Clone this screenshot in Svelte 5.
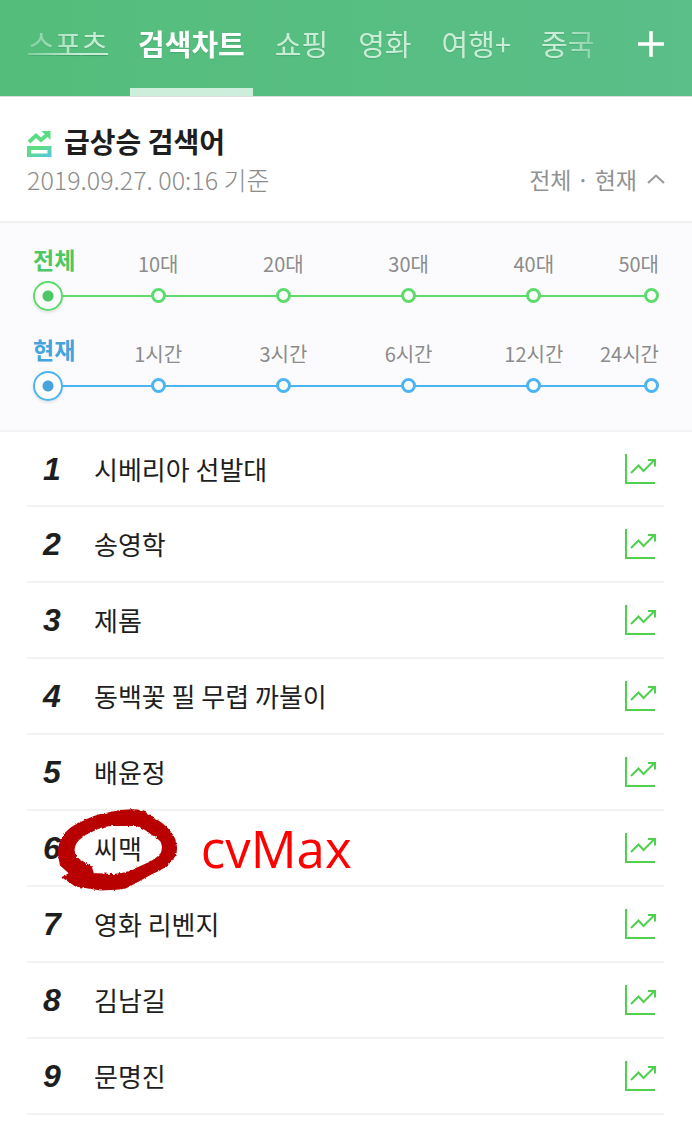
<script>
  const tabs = [
    { name: '스포츠', underlined: true },
    { name: '검색차트', active: true },
    { name: '쇼핑' },
    { name: '영화' },
    { name: '여행+' },
    { name: '중국' },
  ];

  const filters = [
    { id: 'age', options: ['전체', '10대', '20대', '30대', '40대', '50대'] },
    { id: 'time', options: ['현재', '1시간', '3시간', '6시간', '12시간', '24시간'] },
  ];

  const keywords = [
    { text: '시베리아 선발대' },
    { text: '송영학' },
    { text: '제롬' },
    { text: '동백꽃 필 무렵 까불이' },
    { text: '배윤정' },
    { text: '씨맥', note: 'cvMax' },
    { text: '영화 리벤지' },
    { text: '김남길' },
    { text: '문명진' },
  ];

  let selected = $state({ age: '전체', time: '현재' });
</script>

<header class="topbar">
  <nav class="tabs">
    {#each tabs as tab}
      <a href="#top" class="tab" class:active={tab.active} class:underlined={tab.underlined}>{tab.name}</a>
    {/each}
  </nav>
  <button class="add" aria-label="메뉴 추가">
    <svg viewBox="0 0 26 26"><path d="M13 0V26M0 13H26"/></svg>
  </button>
</header>

<main>
  <section class="heading">
    <h1>
      <svg class="logo" viewBox="0 0 26 28" aria-hidden="true">
        <defs>
          <linearGradient id="logo-grad" x1="0" y1="0" x2="1" y2="1">
            <stop offset="35%" stop-color="#5fdc86"/>
            <stop offset="100%" stop-color="#50c6f2"/>
          </linearGradient>
        </defs>
        <path d="M2 11L9 4.500L14 9L21 3" fill="none" stroke="#5bdb83" stroke-width="3.800"/>
        <path d="M14.500 0H23.500V9Z" fill="#5bdb83"/>
        <path fill-rule="evenodd" fill="url(#logo-grad)" d="M0 15H24.500V26H0ZM4 19V22.500H20.500V19Z"/>
      </svg>
      급상승 검색어
    </h1>
    <div class="meta">
      <time datetime="2019-09-27T00:16">2019.09.27. 00:16 기준</time>
      <button class="toggle">
        전체 · 현재
        <svg viewBox="0 0 18 10" aria-hidden="true"><path d="M1 9L9 1.500L17 9"/></svg>
      </button>
    </div>
  </section>

  <section class="filters">
    {#each filters as filter}
      <fieldset class="filter {filter.id}">
        {#each filter.options as option}
          <label class="stop">
            <span>{option}</span>
            <input type="radio" name={filter.id} value={option} bind:group={selected[filter.id]}/>
          </label>
        {/each}
      </fieldset>
    {/each}
  </section>

  <ol class="ranking">
    {#each keywords as keyword, i}
      <li>
        <span class="rank">{i + 1}</span>
        <a href="#keyword" class="keyword">
          {keyword.text}
          {#if keyword.note}
            <svg class="circled" viewBox="-1 -1 124 84" aria-hidden="true">
              <filter id="rough" x="-5%" y="-5%" width="110%" height="110%">
                <feTurbulence type="fractalNoise" baseFrequency="0.35" numOctaves="2" result="n"/>
                <feDisplacementMap in="SourceGraphic" in2="n" scale="3" xChannelSelector="R" yChannelSelector="G"/>
              </filter>
              <path filter="url(#rough)" fill-rule="evenodd" d="M2 45Q2 34 7 27Q12 19 24 14Q38 6 52 4Q67 0 82 1Q91 3 97 9Q108 14 114 22Q121 30 121 39Q121 46 117 50Q110 59 97 64L77 75Q71 79 64 80L44 81L19 77L7 69L14 65L4 56Z
                M16 42Q16 35 21 30Q28 23 37 20Q47 15 57 15L81 15Q90 18 97 24Q104 28 107 32Q110 39 107 45Q102 51 94 55L74 64Q66 67 57 67L36 66L34 59L19 50Z"/>
            </svg>
          {/if}
        </a>
        {#if keyword.note}
          <span class="note">{keyword.note}</span>
        {/if}
        <button class="trend" aria-label="{keyword.text} 검색 추이">
          <svg viewBox="0 0 31 30"><path d="M1 0V29H30M6 19L13.500 11.500L18.500 17L29 6.500M23 6H30V12.500"/></svg>
        </button>
      </li>
    {/each}
  </ol>
</main>

<style>
  :global(body) {
    margin: 0;
    background: #fff;
    color: #1e1e1e;
    font-family: "Noto Sans CJK KR", sans-serif;
  }

  a { color: inherit; text-decoration: none; }

  button {
    padding: 0;
    border: 0;
    background: none;
    color: inherit;
    font: inherit;
  }

  svg { display: block; fill: none; overflow: visible; }

  /* Top bar */
  .topbar {
    display: flex;
    align-items: center;
    justify-content: space-between;
    height: 96px;
    padding-right: 28px;
    border-bottom: 1px solid #dcdfe0;
    background: linear-gradient(90deg, #54bd7b, #5abf88);
    background-clip: padding-box;
  }

  .tabs {
    display: flex;
    gap: 14px;
    height: 96px;
    padding-left: 20px;
    mask-image: linear-gradient(90deg, rgba(0, 0, 0, 0.4) 28px, #000 80px, #000 calc(100% - 44px), rgba(0, 0, 0, 0.3) 100%);
  }

  .tab {
    box-sizing: border-box;
    padding: 0 8px;
    border-bottom: 8px solid transparent;
    color: #c8ecd6;
    font-size: 29px;
    line-height: 86px;
    white-space: nowrap;
    text-shadow: 0 1px 1px rgba(0, 60, 30, 0.15);
  }

  .tab.active {
    border-color: #cdeeda;
    color: #fff;
    font-weight: 700;
  }

  .tab.underlined {
    text-decoration: underline;
    text-decoration-skip-ink: none;
    text-decoration-thickness: 2px;
    text-underline-offset: -3px;
  }

  .add { padding-bottom: 8px; }
  .add svg { width: 26px; height: 26px; stroke: #fff; stroke-width: 3.5; }

  /* Title */
  .heading {
    padding: 26px 27px 22px;
    border-bottom: 2px solid #f0f0f3;
  }

  h1 {
    display: flex;
    align-items: flex-end;
    gap: 11px;
    margin: 0;
    font-size: 28px;
    font-weight: 700;
    line-height: 36px;
  }

  .logo { width: 26px; height: 28px; }

  .meta {
    display: flex;
    align-items: center;
    justify-content: space-between;
    color: #8c8c8c;
    font-size: 25px;
    font-weight: 300;
    line-height: 40px;
  }

  .toggle { display: flex; align-items: center; gap: 10px; color: #929292; font-size: 23px; font-weight: 400; }
  .toggle svg { width: 18px; height: 10px; stroke: #999; stroke-width: 2; }

  /* Filters */
  .filters {
    padding: 20px 33px 7px;
    border-bottom: 2px solid #f3f3f5;
    background: #fbfbfd;
  }

  .filter {
    --accent: #5ddb6c;
    --accent-text: #4dc763;
    display: grid;
    grid-template-columns: 1fr repeat(4, 2fr) 1fr;
    min-width: 0;
    margin: 0;
    padding: 0 0 22px;
    border: 0;
    background: linear-gradient(var(--accent), var(--accent)) 14px 52px / calc(100% - 28px) 2px no-repeat;
  }

  .filter.time { --accent: #4cb4f2; --accent-text: #46a3dc; }

  .stop {
    display: flex;
    flex-direction: column;
    align-items: center;
    min-width: 0;
    color: #8c8c8c;
    font-size: 20px;
    line-height: 42px;
    white-space: nowrap;
  }

  .stop:first-child {
    align-items: flex-start;
    color: var(--accent-text);
    font-size: 23px;
    font-weight: 700;
    line-height: 32px;
  }

  .stop:last-child { align-items: flex-end; }

  .stop span { height: 38px; }

  .stop input {
    appearance: none;
    box-sizing: border-box;
    width: 15px;
    height: 15px;
    margin: 7px 0 8px;
    border: 3px solid var(--accent);
    border-radius: 50%;
    background: #fff;
  }

  .stop input:checked {
    width: 30px;
    height: 30px;
    margin: 0;
    border-width: 2px;
    background: radial-gradient(circle, var(--accent-text) 5px, #fff 6px);
    box-shadow: 0 2px 3px rgba(0, 0, 0, 0.1);
  }

  /* Ranking */
  .ranking {
    margin: 0;
    padding: 0 28px 0 27px;
    list-style: none;
  }

  li {
    display: flex;
    align-items: center;
    box-sizing: border-box;
    height: 76px;
    padding-right: 8px;
    border-bottom: 2px solid #f2f2f2;
  }

  li:first-child { height: 75px; }

  .rank {
    width: 50px;
    margin-right: 17px;
    text-align: center;
    font: italic 700 32px/40px "Liberation Sans", sans-serif;
  }

  .keyword {
    position: relative;
    font-size: 26px;
    line-height: 38px;
  }

  .circled {
    position: absolute;
    top: -20px;
    left: -38px;
    width: 122px;
    height: 82px;
    fill: #b90000;
    stroke: #b90000;
    stroke-width: 3;
  }

  .note {
    margin-left: 59px;
    color: #f00;
    font: 51px/60px "Open Sans", sans-serif;
  }

  .trend { margin-left: auto; }
  .trend svg { width: 31px; height: 30px; stroke: #4fd04f; stroke-width: 2; }
</style>
